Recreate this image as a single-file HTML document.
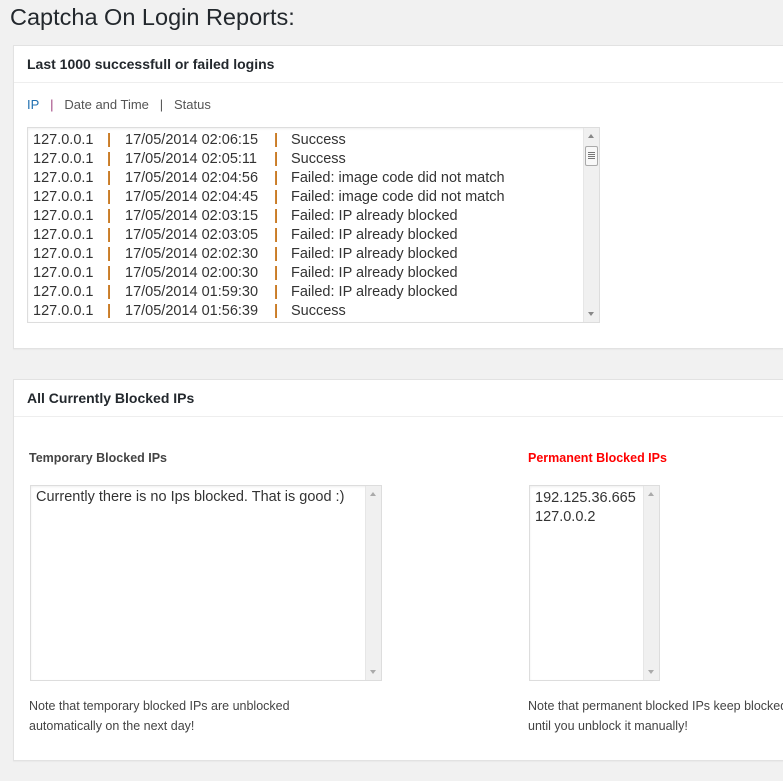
<!DOCTYPE html>
<html><head><meta charset="utf-8"><style>
*{margin:0;padding:0;box-sizing:border-box}
body{width:783px;height:781px;background:#f1f1f1;font-family:"Liberation Sans",sans-serif;color:#444;position:relative;overflow:hidden}
.a{position:absolute;white-space:nowrap}
.panel{position:absolute;left:13px;width:800px;background:#fff;border:1px solid #e2e2e2;box-shadow:0 1px 1px rgba(0,0,0,.04)}
.hd{position:absolute;left:0;right:0;border-bottom:1px solid #eee}
.ta{position:absolute;background:#fff;border:1px solid #ddd;box-shadow:inset 0 1px 2px rgba(0,0,0,.07)}
.sb{position:absolute;top:0;right:0;bottom:0;width:16px;background:#f0f0f0;border-left:1px solid #e6e6e6}
.up,.dn{position:absolute;left:4px;width:0;height:0;border-left:3px solid transparent;border-right:3px solid transparent}
.up{top:6px;border-bottom:4px solid #888}
.dn{bottom:6px;border-top:4px solid #888}
.row{position:absolute;left:0;width:555px;height:19px;font-size:14.5px;color:#333;line-height:19px;white-space:nowrap}
.row span{position:absolute;top:0;white-space:nowrap}
.p{color:#c8771e;font-weight:bold}
</style></head><body>
<div class="a" style="left:10px;top:2px;font-size:23.5px;color:#23282d;line-height:30px">Captcha On Login Reports:</div>

<div class="panel" style="top:45px;height:304px">
  <div class="hd" style="top:0;height:37px"></div>
  <div class="a" style="left:13px;top:10px;font-size:14px;font-weight:bold;color:#23282d">Last 1000 successfull or failed logins</div>
  <div class="a" style="left:13px;top:51px;font-size:13px;color:#555"><span style="color:#2271b1">IP</span>&nbsp;&nbsp;&nbsp;<span style="color:#a0447f">|</span>&nbsp;&nbsp;&nbsp;Date and Time&nbsp;&nbsp;&nbsp;|&nbsp;&nbsp;&nbsp;Status</div>
  <div class="ta" style="left:13px;top:81px;width:573px;height:196px;overflow:hidden">
    <div class="sb"><div class="up"></div><div style="position:absolute;top:18px;left:1px;width:13px;height:20px;background:#f8f8f8;border:1px solid #aaa;border-radius:2px"><div style="margin:5px 2px 0;height:1px;background:#777;box-shadow:0 2px 0 #777,0 4px 0 #777,0 6px 0 #777"></div></div><div class="dn"></div></div>
  </div>
</div>

<div class="panel" style="top:379px;height:382px">
  <div class="hd" style="top:0;height:37px"></div>
  <div class="a" style="left:13px;top:10px;font-size:14px;font-weight:bold;color:#23282d">All Currently Blocked IPs</div>
  <div class="a" style="left:15px;top:71px;font-size:12.5px;font-weight:bold;color:#444">Temporary Blocked IPs</div>
  <div class="a" style="left:514px;top:71px;font-size:12.5px;font-weight:bold;color:#f00">Permanent Blocked IPs</div>
  <div class="ta" style="left:16px;top:105px;width:352px;height:196px">
    <div class="a" style="left:5px;top:3px;font-size:14.5px;color:#333">Currently there is no Ips blocked. That is good :)</div>
    <div class="sb"><div class="up" style="border-bottom-color:#aaa"></div><div class="dn" style="border-top-color:#aaa"></div></div>
  </div>
  <div class="ta" style="left:515px;top:105px;width:131px;height:196px">
    <div class="a" style="left:5px;top:3px;font-size:14.5px;color:#333;line-height:19px">192.125.36.665<br>127.0.0.2</div>
    <div class="sb"><div class="up" style="border-bottom-color:#aaa"></div><div class="dn" style="border-top-color:#aaa"></div></div>
  </div>
  <div class="a" style="left:15px;top:316px;font-size:12.5px;color:#444;line-height:20px">Note that temporary blocked IPs are unblocked<br>automatically on the next day!</div>
  <div class="a" style="left:514px;top:316px;font-size:12.5px;color:#444;line-height:20px">Note that permanent blocked IPs keep blocked<br>until you unblock it manually!</div>
</div>

<div style="position:absolute;left:27px;top:131px;width:555px;height:190px;overflow:hidden">
<div class="row" style="top:0"><span style="left:6px">127.0.0.1</span><span class="p" style="left:80px">|</span><span style="left:98px">17/05/2014 02:06:15</span><span class="p" style="left:247px">|</span><span style="left:264px">Success</span></div>
<div class="row" style="top:19px"><span style="left:6px">127.0.0.1</span><span class="p" style="left:80px">|</span><span style="left:98px">17/05/2014 02:05:11</span><span class="p" style="left:247px">|</span><span style="left:264px">Success</span></div>
<div class="row" style="top:38px"><span style="left:6px">127.0.0.1</span><span class="p" style="left:80px">|</span><span style="left:98px">17/05/2014 02:04:56</span><span class="p" style="left:247px">|</span><span style="left:264px">Failed: image code did not match</span></div>
<div class="row" style="top:57px"><span style="left:6px">127.0.0.1</span><span class="p" style="left:80px">|</span><span style="left:98px">17/05/2014 02:04:45</span><span class="p" style="left:247px">|</span><span style="left:264px">Failed: image code did not match</span></div>
<div class="row" style="top:76px"><span style="left:6px">127.0.0.1</span><span class="p" style="left:80px">|</span><span style="left:98px">17/05/2014 02:03:15</span><span class="p" style="left:247px">|</span><span style="left:264px">Failed: IP already blocked</span></div>
<div class="row" style="top:95px"><span style="left:6px">127.0.0.1</span><span class="p" style="left:80px">|</span><span style="left:98px">17/05/2014 02:03:05</span><span class="p" style="left:247px">|</span><span style="left:264px">Failed: IP already blocked</span></div>
<div class="row" style="top:114px"><span style="left:6px">127.0.0.1</span><span class="p" style="left:80px">|</span><span style="left:98px">17/05/2014 02:02:30</span><span class="p" style="left:247px">|</span><span style="left:264px">Failed: IP already blocked</span></div>
<div class="row" style="top:133px"><span style="left:6px">127.0.0.1</span><span class="p" style="left:80px">|</span><span style="left:98px">17/05/2014 02:00:30</span><span class="p" style="left:247px">|</span><span style="left:264px">Failed: IP already blocked</span></div>
<div class="row" style="top:152px"><span style="left:6px">127.0.0.1</span><span class="p" style="left:80px">|</span><span style="left:98px">17/05/2014 01:59:30</span><span class="p" style="left:247px">|</span><span style="left:264px">Failed: IP already blocked</span></div>
<div class="row" style="top:171px"><span style="left:6px">127.0.0.1</span><span class="p" style="left:80px">|</span><span style="left:98px">17/05/2014 01:56:39</span><span class="p" style="left:247px">|</span><span style="left:264px">Success</span></div>
</div>
</body></html>
